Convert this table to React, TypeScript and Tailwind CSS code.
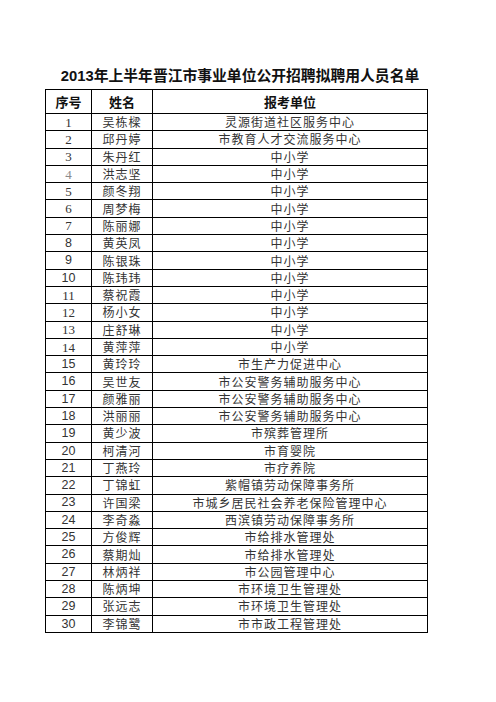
const rows: [string, string, string][] = [
  ['1', '吴栋樑', '灵源街道社区服务中心'],
  ['2', '邱丹婷', '市教育人才交流服务中心'],
  ['3', '朱丹红', '中小学'],
  ['4', '洪志坚', '中小学'],
  ['5', '颜冬翔', '中小学'],
  ['6', '周梦梅', '中小学'],
  ['7', '陈丽娜', '中小学'],
  ['8', '黄英凤', '中小学'],
  ['9', '陈银珠', '中小学'],
  ['10', '陈玮玮', '中小学'],
  ['11', '蔡祝霞', '中小学'],
  ['12', '杨小女', '中小学'],
  ['13', '庄舒琳', '中小学'],
  ['14', '黄萍萍', '中小学'],
  ['15', '黄玲玲', '市生产力促进中心'],
  ['16', '吴世友', '市公安警务辅助服务中心'],
  ['17', '颜雅丽', '市公安警务辅助服务中心'],
  ['18', '洪丽丽', '市公安警务辅助服务中心'],
  ['19', '黄少波', '市殡葬管理所'],
  ['20', '柯清河', '市育婴院'],
  ['21', '丁燕玲', '市疗养院'],
  ['22', '丁锦虹', '紫帽镇劳动保障事务所'],
  ['23', '许国梁', '市城乡居民社会养老保险管理中心'],
  ['24', '李奇淼', '西滨镇劳动保障事务所'],
  ['25', '方俊辉', '市给排水管理处'],
  ['26', '蔡期灿', '市给排水管理处'],
  ['27', '林炳祥', '市公园管理中心'],
  ['28', '陈炳坤', '市环境卫生管理处'],
  ['29', '张远志', '市环境卫生管理处'],
  ['30', '李锦鹭', '市市政工程管理处'],
]

// numbers printed in a serif face in the scan
const serifNums = new Set(['1', '2', '3', '4', '5', '6', '7', '11', '12', '13', '14'])

const cjk = "font-['Noto_Sans_CJK_SC',sans-serif]"

export default function App() {
  return (
    <div className="min-h-[702px] w-[496px] bg-white pt-[64px]">
      <div className="ml-[45px] w-[383px]">
        <h1
          className={`pl-[7px] text-center text-[14.8px] leading-[22px] font-bold text-[#111] ${cjk}`}
        >
          <span className="font-['Liberation_Sans']">2013</span>年上半年晋江市事业单位公开招聘拟聘用人员名单
        </h1>
        <div className="mt-[2px] border-r border-b border-l border-black">
          <div className={`flex h-[24px] border-t border-black text-[13px] font-bold text-[#111] ${cjk}`}>
            <div className="flex w-[45px] items-center justify-center">序号</div>
            <div className="flex w-[61px] items-center justify-center border-l border-black">姓名</div>
            <div className="flex flex-1 items-center justify-center border-l border-black">报考单位</div>
          </div>
          {rows.map(([n, name, unit]) => (
            <div key={n} className="flex h-[17.3px] border-t border-black text-[12px] leading-none text-[#333]">
              <div
                className={`flex w-[45px] items-center justify-center ${
                  serifNums.has(n) ? "font-['Liberation_Serif'] text-[13px]" : "font-['Liberation_Sans'] text-[12.5px]"
                } ${n === '4' ? 'text-[#8a8a8a]' : ''}`}
              >
                {n}
              </div>
              <div
                className={`flex w-[61px] items-center justify-center border-l border-black tracking-[1px] ${cjk}`}
              >
                {name}
              </div>
              <div
                className={`flex flex-1 items-center justify-center border-l border-black tracking-[1px] ${cjk}`}
              >
                {unit}
              </div>
            </div>
          ))}
        </div>
      </div>
    </div>
  )
}
